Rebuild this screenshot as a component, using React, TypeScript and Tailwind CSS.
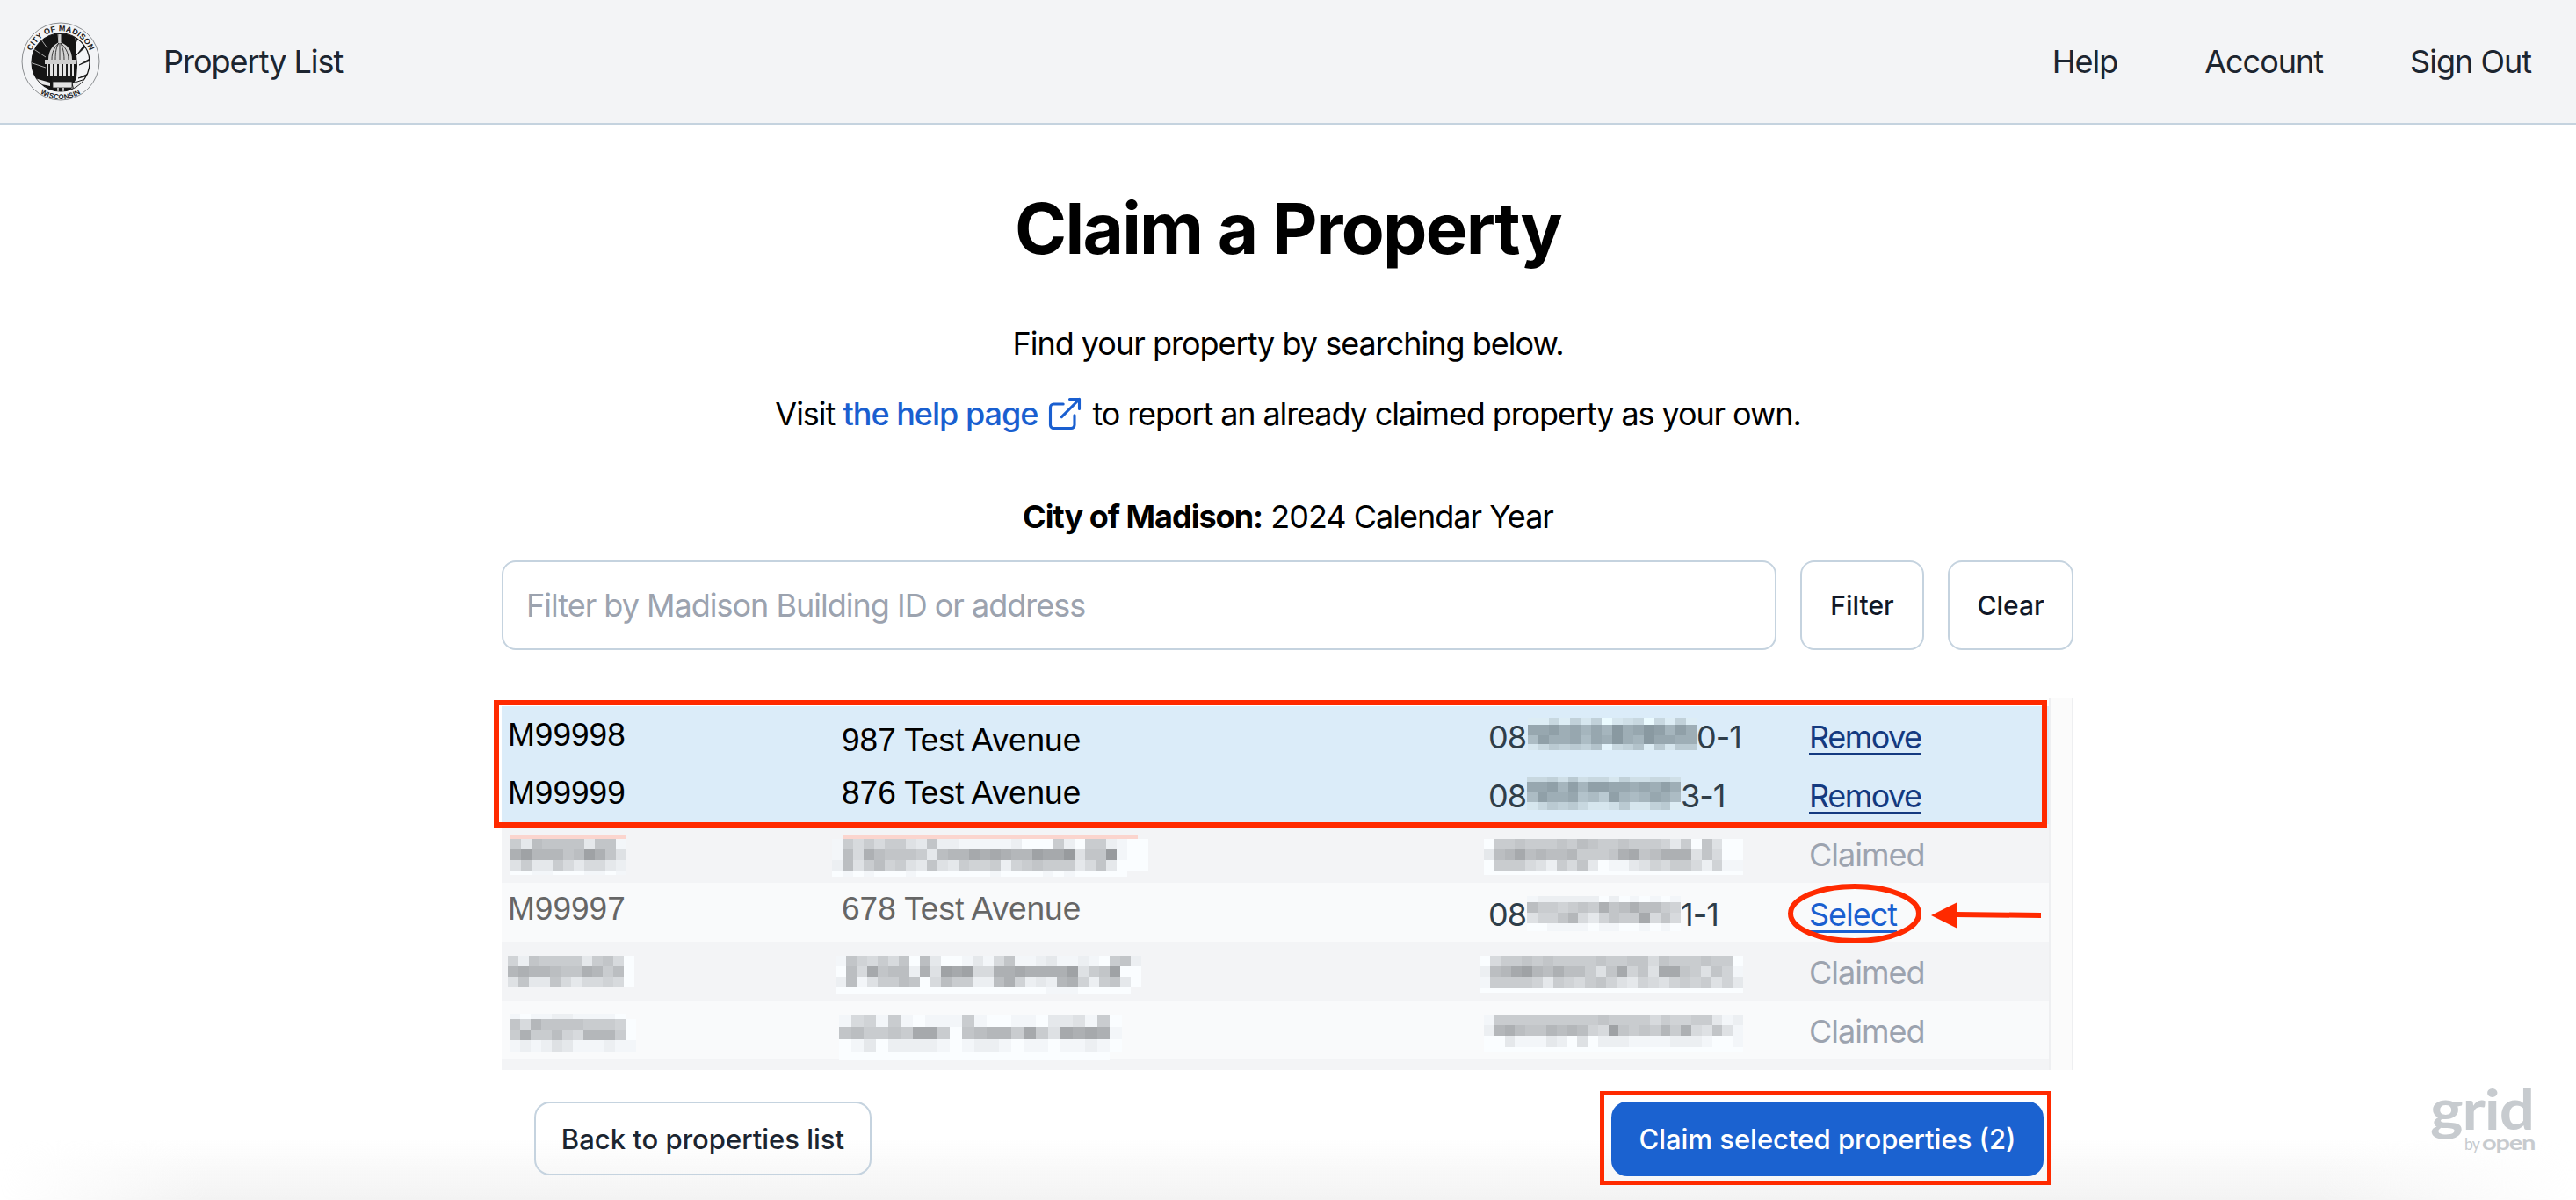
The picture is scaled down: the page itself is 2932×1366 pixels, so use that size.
import React from "react";
import { ExternalLink } from "lucide-react";

function shade(c: string, blue: boolean): string {
  if (c === "p") return "#fbd5ce";
  const d = parseInt(c, 16);
  const v = 145 + d * 7;
  if (blue) return `rgb(${v - 8},${Math.min(v + 8, 255)},${Math.min(v + 16, 255)})`;
  return `rgb(${v},${Math.min(v + 3, 255)},${Math.min(v + 6, 255)})`;
}

function Pix({
  rows,
  hs,
  cw = 12,
  blue = false,
  className = "",
}: {
  rows: string[];
  hs: number[];
  cw?: number;
  blue?: boolean;
  className?: string;
}) {
  const w = Math.max(...rows.map((r) => r.length)) * cw;
  const h = hs.reduce((a, b) => a + b, 0);
  let y = 0;
  return (
    <svg width={w} height={h} viewBox={`0 0 ${w} ${h}`} shapeRendering="crispEdges" className={`shrink-0 ${className}`}>
      {rows.map((r, i) => {
        const top = y;
        y += hs[i];
        return r
          .split("")
          .map((c, j) =>
            c === "." ? null : <rect key={`${i}-${j}`} x={j * cw} y={top} width={cw} height={hs[i]} fill={shade(c, blue)} />
          );
      })}
    </svg>
  );
}

function Seal() {
  return (
    <svg width="90" height="90" viewBox="0 0 90 90" className="shrink-0">
      <defs>
        <clipPath id="sealClip">
          <circle cx="45" cy="46" r="33" />
        </clipPath>
        <path id="sealTop" d="M 9.5 46 A 35.5 35.5 0 0 1 80.5 46" fill="none" />
        <path id="sealBottom" d="M 3 46 A 42 42 0 0 0 87 46" fill="none" />
      </defs>
      <circle cx="45" cy="45" r="44" fill="none" stroke="#8a8d90" strokeWidth="1" />
      <circle cx="45" cy="46" r="33" fill="#f3f4f6" stroke="#111" strokeWidth="1.2" />
      <g clipPath="url(#sealClip)">
        <path d="M8 12 H61 L64 50 L63 64 L54 82 H8 Z" fill="#141414" />
        <path d="M66 14 L60 30 L63 15 Z M78 24 L63 38 L75 22 Z M84 42 L66 49 L83 39 Z M82 60 L65 64 L81 57 Z" fill="#141414" stroke="#141414" strokeWidth="0.8" />
        <path d="M10 28 L28 40 M10 46 L28 52 M42 14 L43 24 M20 16 L30 30" stroke="#e8e8e8" strokeWidth="0.7" />
        <path d="M8 62 L33 69 L33 73 L8 68 Z" fill="#e8e8e8" />
        <path d="M58 70 L82 62 L82 70 L60 78 Z" fill="#e8e8e8" stroke="#141414" strokeWidth="1" />
        <path d="M31 43 C31 32 37 25 44 23 C52 25 58 32 58 43 Z" fill="#d2d2d2" />
        <path d="M35 43 C35 34 38 29 43 24 M39 43 C39 34 40 29 43 24 M44 43 L44 24 M49 43 C49 34 47 29 45 24 M54 43 C54 34 50 29 45 24" stroke="#2a2a2a" strokeWidth="0.9" fill="none" />
        <rect x="42.5" y="14" width="3" height="10" fill="#d0d0d0" />
        <rect x="27" y="43" width="35" height="5" fill="#cfcfcf" />
        <rect x="29" y="48" width="31" height="13" fill="#e4e4e4" />
        <path d="M32 48 V61 M37 48 V61 M42 48 V61 M47 48 V61 M52 48 V61 M57 48 V61" stroke="#1c1c1c" strokeWidth="2" />
        <rect x="35" y="61" width="24" height="8" fill="#1a1a1a" />
        <rect x="36" y="68" width="22" height="7" fill="#e4e4e4" stroke="#222" strokeWidth="0.8" />
        <path d="M42 75 V84 M48 75 V84" stroke="#e8e8e8" strokeWidth="1.5" />
      </g>
      <text fontFamily="'Liberation Sans', sans-serif" fontSize="9" fontWeight="700" fill="#1a1a1a" textAnchor="middle" letterSpacing="0.3">
        <textPath href="#sealTop" startOffset="50%">CITY OF MADISON</textPath>
      </text>
      <text fontFamily="'Liberation Sans', sans-serif" fontSize="8" fontWeight="700" fill="#1a1a1a" textAnchor="middle" letterSpacing="0.3">
        <textPath href="#sealBottom" startOffset="50%">WISCONSIN</textPath>
      </text>
    </svg>
  );
}

function GridLogo() {
  return (
    <svg width="122" height="90" viewBox="0 0 122 90" fill="#c7cbcf" fontFamily="Lato, sans-serif" className="overflow-visible">
      <text x="0" y="46" fontSize="64" fontWeight="700" textLength="118" lengthAdjust="spacingAndGlyphs">grid</text>
      <text x="39" y="69" fontSize="20" textLength="17" lengthAdjust="spacingAndGlyphs">by</text>
      <text x="59" y="69" fontSize="23" fontWeight="700" textLength="60" lengthAdjust="spacingAndGlyphs">open</text>
    </svg>
  );
}

const rowGrid = "grid grid-cols-[380px_736px_365px_1fr] pl-[7px] h-[67px]";
const arial = "font-['Liberation_Sans',Arial,sans-serif] text-[37px] tracking-normal";

export default function App() {
  return (
    <div className="relative h-[1366px] overflow-hidden bg-white font-['Inter',sans-serif] text-[36px] tracking-[-1px] text-black">
      <div className="pointer-events-none absolute inset-x-0 bottom-0 h-[70px] bg-gradient-to-b from-white/0 to-[#f3f3f3] [mask-image:linear-gradient(to_right,transparent,black_8%,black_90%,transparent)]" />

      <header className="relative flex h-[142px] items-center justify-between border-b-2 border-[#c5d3df] bg-[#f3f4f6] pl-6 pr-[51px] text-[#1c2530]">
        <div className="flex items-center gap-[72px]">
          <Seal />
          <span>Property List</span>
        </div>
        <nav className="flex items-center gap-[99px]">
          <span>Help</span>
          <span>Account</span>
          <span>Sign Out</span>
        </nav>
      </header>

      <main className="relative mx-auto w-[1790px]">
        <h1 className="mt-[70px] text-center text-[80px] font-bold leading-[96px] tracking-[-1.7px]">Claim a Property</h1>
        <p className="mt-14 text-center leading-[54px]">Find your property by searching below.</p>
        <p className="mt-[26px] flex items-center justify-center leading-[54px]">
          <span>Visit&nbsp;</span>
          <span className="font-medium text-[#1a5fd0]">the help page</span>
          <ExternalLink size={44} strokeWidth={1.7} className="ml-[9px] mr-[9px] text-[#1a5fd0]" />
          <span className="tracking-[-1.1px]">to report an already claimed property as your own.</span>
        </p>
        <p className="mt-[63px] text-center leading-[54px]">
          <span className="font-bold">City of Madison:</span> 2024 Calendar Year
        </p>

        <div className="mt-[23px] flex items-stretch gap-[27px]">
          <div className="flex h-[102px] w-[1451px] items-center rounded-2xl border-2 border-[#c5d3df] pl-[26px] text-[#9ca3af]">
            Filter by Madison Building ID or address
          </div>
          <button className="w-[141px] rounded-2xl border-2 border-[#c5d3df] text-[30px] font-medium tracking-normal text-[#111827]">Filter</button>
          <button className="w-[143px] rounded-2xl border-2 border-[#c5d3df] text-[30px] font-medium tracking-normal text-[#111827]">Clear</button>
        </div>

        <div className="relative mt-[55px] flex h-[423px] w-[1789px]">
          <div className="w-[1761px] pt-[9px]">
            <div className={`${rowGrid} bg-[#dbecf9] leading-[44px]`}>
              <div className={`${arial} pt-[11px]`}>M99998</div>
              <div className={`${arial} pt-[17px]`}>987 Test Avenue</div>
              <div className="flex items-start pt-[13px] text-[#2f3e4a]">
                <span>08</span>
                <Pix
                  blue
                  className="ml-[2px]"
                  hs={[8, 12, 10, 7]}
                  rows={["cc9c8b8eba9e9c8c", "2213242403201413", "5133252303402233", "b978786d986c7b77"]}
                />
                <span>0-1</span>
              </div>
              <div className="pt-[13px] tracking-[-1.5px] text-[#143a80] underline underline-offset-[5px]">Remove</div>
            </div>
            <div className={`${rowGrid} bg-[#dbecf9] leading-[44px]`}>
              <div className={`${arial} pt-[10px]`}>M99999</div>
              <div className={`${arial} pt-[10px]`}>876 Test Avenue</div>
              <div className="flex items-start pt-[13px] text-[#2f3e4a]">
                <span>08</span>
                <Pix
                  blue
                  cw={11.67}
                  className="ml-[1px]"
                  hs={[6, 12, 11, 9]}
                  rows={["998a7a99b8aa99a", "221414112232313", "513326571454235", "b97879bba7bb87c"]}
                />
                <span>3-1</span>
              </div>
              <div className="pt-[13px] tracking-[-1.5px] text-[#143a80] underline underline-offset-[5px]">Remove</div>
            </div>

            <div className={`${rowGrid} h-[67px] bg-[#f3f4f6]`}>
              <div>
                <Pix
                  className="ml-[3px] mt-3"
                  hs={[5, 12, 12, 12, 5]}
                  rows={["ppppppppppp", "8c67777c77e", "4255576247b", "b8cc8acaacd", "ffeefffeefe"]}
                />
              </div>
              <div>
                <Pix
                  className="-ml-[11px] mt-3"
                  hs={[5, 12, 12, 12, 7]}
                  rows={[
                    ".pppppppppppppppppppppppppppp.",
                    "e8a8a88bc7ddeeeeedfff8df88deff",
                    "e6a467778c6553434552331b771eff",
                    "d6b8698bc7bc8998d987888ca7cfff",
                    "fefefffefffffffeffffefefffff..",
                  ]}
                />
              </div>
              <div>
                <Pix
                  cw={11.8}
                  className="-ml-[5px] mt-[17px]"
                  hs={[12, 12, 13, 4]}
                  rows={["f88788878678878889c8f7bff", "c6536566588874376444b7aff", "f888abd8a7cfeecb9a88ad9ee", "fffffffffffffffffffffffff"]}
                />
              </div>
              <div className="pt-[13px] leading-[44px] text-[#9ca3af]">Claimed</div>
            </div>

            <div className={`${rowGrid} bg-[#f9fafb] leading-[44px]`}>
              <div className={`${arial} pt-[8px] text-[#666666]`}>M99997</div>
              <div className={`${arial} pt-[8px] text-[#666666]`}>678 Test Avenue</div>
              <div className="flex items-start pt-[14px] text-[#2f3e4a]">
                <span>08</span>
                <Pix
                  cw={11.67}
                  className="ml-[1px] mt-[1px]"
                  hs={[7, 12, 12, 9]}
                  rows={["eddddddfdfefefe", "688987847646689", "b9975ac97883a7a", "ffeeeefeeffefef"]}
                />
                <span>1-1</span>
              </div>
              <div className="pt-[14px] text-[#1a5fd0] underline underline-offset-[5px]">Select</div>
            </div>

            <div className={`${rowGrid} bg-[#f3f4f6]`}>
              <div>
                <Pix className="mt-4" hs={[12, 12, 12]} rows={["9d78888c87af", "54556774586f", "b7cc7acaa9af"]} />
              </div>
              <div>
                <Pix
                  className="-ml-[7px] mt-4"
                  hs={[12, 12, 12, 8]}
                  rows={[
                    "e79a8a7f6cffecea7eedceedef87d",
                    "f6a3766d4b232aa44344442b872ff",
                    "d6eb8867fa688dd649dcd549d87cf",
                    "ffffffffffffffffffffeeefffff.",
                  ]}
                />
              </div>
              <div>
                <Pix
                  className="-ml-[10px] mt-4"
                  hs={[12, 12, 13, 5]}
                  rows={["fa88787888878877a7888788f", "d6532564668b7397b3378b79e", "e88889c89a879bc9ab9898b9c", "fffffffffffffffffffffffff"]}
                />
              </div>
              <div className="pt-[13px] leading-[44px] text-[#9ca3af]">Claimed</div>
            </div>

            <div className={`${rowGrid} bg-[#f9fafb]`}>
              <div>
                <Pix
                  className="ml-[2px] mt-[15px]"
                  hs={[6, 12, 12, 13]}
                  rows={["efeeddeeeef.", "7a577778889f", "848869a5558f", "ededbceeedee"]}
                />
              </div>
              <div>
                <Pix
                  cw={14}
                  className="-ml-[3px] mt-4"
                  hs={[14, 14, 14, 10]}
                  rows={["ea9e8efeee8effeefccbe8f", "768878338f7655838b3434e", "fecfddddefeddefeefeedef", "ffffffffffffffffffffff."]}
                />
              </div>
              <div>
                <Pix
                  cw={11.8}
                  className="-ml-[5px] mt-4"
                  hs={[12, 12, 13, 5]}
                  rows={["e888888888878888a89988ced", "d5467756569a27878584ab7be", "ffceeecdfbfdddeeeedddeffe", "fffffffffffffffffffffffff"]}
                />
              </div>
              <div className="pt-[13px] leading-[44px] text-[#9ca3af]">Claimed</div>
            </div>
            <div className="h-3 bg-[#f3f4f6]" />
          </div>
          <div className="w-[28px] border-x-2 border-[#eeeff1] bg-[#fbfbfb]" />

          <div className="pointer-events-none absolute left-[-9px] top-[2px] h-[145px] w-[1768px] border-[6px] border-[#ff2a00]" />
          <svg className="pointer-events-none absolute left-[1459px] top-[205px]" width="300" height="80" viewBox="0 0 300 80">
            <ellipse cx="81" cy="40" rx="73" ry="31" fill="none" stroke="#ff2a00" strokeWidth="6" />
            <path d="M293 42 L196 41" stroke="#ff2a00" strokeWidth="6" />
            <polygon points="168,42 198,27 198,57" fill="#ff2a00" />
          </svg>
        </div>

        <div className="mt-9 flex items-start justify-between pl-[37px] pr-[35px] tracking-normal">
          <button className="h-[84px] w-[384px] rounded-[18px] border-2 border-[#c5d3df] pt-[2px] text-[31px] font-medium text-[#1c2530]">
            Back to properties list
          </button>
          <div className="relative">
            <button className="h-[85px] w-[492px] rounded-[18px] bg-[#1b62d0] pt-[2px] text-[31px] font-medium text-white">
              Claim selected properties (2)
            </button>
            <div className="pointer-events-none absolute -bottom-[10px] -left-[13px] -right-[9px] -top-[12px] border-[5px] border-[#ff2a00]" />
          </div>
        </div>
      </main>

      <div className="pointer-events-none absolute bottom-[36px] right-[44px]">
        <GridLogo />
      </div>
    </div>
  );
}
